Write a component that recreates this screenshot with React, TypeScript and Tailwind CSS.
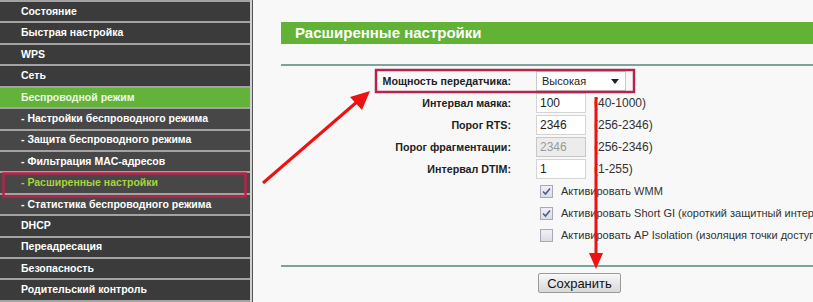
import React from 'react';

const MENU: { label: string; sub?: boolean; active?: boolean; current?: boolean }[] = [
  { label: 'Состояние' },
  { label: 'Быстрая настройка' },
  { label: 'WPS' },
  { label: 'Сеть' },
  { label: 'Беспроводной режим', active: true },
  { label: '- Настройки беспроводного режима', sub: true },
  { label: '- Защита беспроводного режима', sub: true },
  { label: '- Фильтрация MAC-адресов', sub: true },
  { label: '- Расширенные настройки', sub: true, current: true },
  { label: '- Статистика беспроводного режима', sub: true },
  { label: 'DHCP' },
  { label: 'Переадресация' },
  { label: 'Безопасность' },
  { label: 'Родительский контроль' },
];

const FIELDS = [
  { label: 'Интервал маяка:', value: '100', range: '(40-1000)' },
  { label: 'Порог RTS:', value: '2346', range: '(256-2346)' },
  { label: 'Порог фрагментации:', value: '2346', range: '(256-2346)', disabled: true },
  { label: 'Интервал DTIM:', value: '1', range: '(1-255)' },
];

const CHECKS = [
  { label: 'Активировать WMM', checked: true },
  { label: 'Активировать Short GI (короткий защитный интервал)', checked: true },
  { label: 'Активировать AP Isolation (изоляция точки доступа)', checked: false },
];

function Checkbox({ checked }: { checked: boolean }) {
  return (
    <span className="w-[13px] h-[13px] border border-[#a8a8b8] bg-gradient-to-b from-[#f0f0f4] to-[#dcdce4] flex items-center justify-center shrink-0">
      {checked && (
        <svg width="9" height="9" viewBox="0 0 9 9">
          <path d="M1 4.5 L3.5 7 L8 1.5" fill="none" stroke="#4a5a8a" strokeWidth="1.6" />
        </svg>
      )}
    </span>
  );
}

export default function App() {
  return (
    <div className="relative flex w-[813px] h-[302px] overflow-hidden bg-[#f8f8f8] font-['Liberation_Sans',Arial,sans-serif]">
      {/* Sidebar */}
      <aside className="w-[250px] shrink-0 bg-[#a3a3a3] flex flex-col pt-[2px]">
        {MENU.map(m => (
          <div
            key={m.label}
            className={`h-[19.6px] mb-[2px] flex items-center pl-[21px] text-[10.5px] font-bold whitespace-nowrap ${
              m.active ? 'bg-[#63b33a] text-[#eef8e8]' : m.sub ? 'bg-[#474747]' : 'bg-[#3b3b3b]'
            } ${m.current ? 'text-[#a8d43c]' : m.active ? '' : 'text-white'}`}
          >
            {m.label}
          </div>
        ))}
      </aside>
      <div className="w-[3px] shrink-0 bg-[#cfcfcf] border-r border-[#555]" />

      {/* Content */}
      <main className="flex-1 pl-[28px] pt-[22px]">
        <div className="h-[22px] bg-[#62b235] flex items-center pl-[14px] text-white font-bold text-[15px]">
          Расширенные настройки
        </div>
        <div className="mt-[20px] border-t-2 border-[#7fa39a] pt-[5px]">
          <div className="grid grid-cols-[230px_1fr] gap-x-[25px] gap-y-[2px] items-center text-[12px]">
            <div className="h-[20px] flex items-center justify-end font-bold text-[10.7px] text-[#222]">Мощность передатчика:</div>
            <div className="h-[20px] flex">
              <div className="w-[90px] h-[20px] bg-white border border-[#c8c8c8] flex items-center justify-between pl-[5px] pr-[6px] text-[11px] text-[#222]">
                <span>Высокая</span>
                <svg width="8" height="5" viewBox="0 0 8 5"><path d="M0 0 H8 L4 5 Z" fill="#222" /></svg>
              </div>
            </div>
            {FIELDS.map(f => (
              <React.Fragment key={f.label}>
                <div className="h-[20px] flex items-center justify-end font-bold text-[10.7px] text-[#222]">{f.label}</div>
                <div className="h-[20px] flex items-center gap-[8px]">
                  <div
                    className={`w-[50px] h-[20px] border flex items-center pl-[3px] ${
                      f.disabled ? 'bg-[#ececec] border-[#c8c8c8] text-[#999]' : 'bg-white border-[#d4d4d4] text-[#222]'
                    }`}
                  >
                    {f.value}
                  </div>
                  <span className="text-[#333]">{f.range}</span>
                </div>
              </React.Fragment>
            ))}
            {CHECKS.map(c => (
              <React.Fragment key={c.label}>
                <div className="h-[20px]" />
                <div className="h-[20px] flex items-center gap-[8px] pl-[4px] whitespace-nowrap text-[11px] text-[#333]">
                  <Checkbox checked={c.checked} />
                  <span>{c.label}</span>
                </div>
              </React.Fragment>
            ))}
          </div>
          <div className="mt-[20px] border-t-2 border-[#7fa39a] pt-[4px] pl-[257px]">
            <button className="w-[83px] h-[20px] border border-[#9a9a9a] rounded-[2px] bg-gradient-to-b from-[#f8f8f8] to-[#d8d8d8] text-[13px] text-[#111]">
              Сохранить
            </button>
          </div>
        </div>
      </main>

      {/* Red annotations */}
      <svg className="absolute inset-0 pointer-events-none" width="813" height="302" viewBox="0 0 813 302">
        <rect x="3.5" y="173.5" width="242" height="23" fill="none" stroke="#b8234a" strokeWidth="2.5" />
        <rect x="376" y="70" width="258" height="22" fill="none" stroke="#b8234a" strokeWidth="2.5" />
        <line x1="263" y1="183" x2="358" y2="101" stroke="#ee1111" strokeWidth="3" />
        <polygon points="370,91 350,97 362,110" fill="#ee1111" />
        <line x1="596" y1="97" x2="596" y2="255" stroke="#ee1111" strokeWidth="3" />
        <polygon points="589,253 603,253 596,269" fill="#ee1111" />
      </svg>
    </div>
  );
}
